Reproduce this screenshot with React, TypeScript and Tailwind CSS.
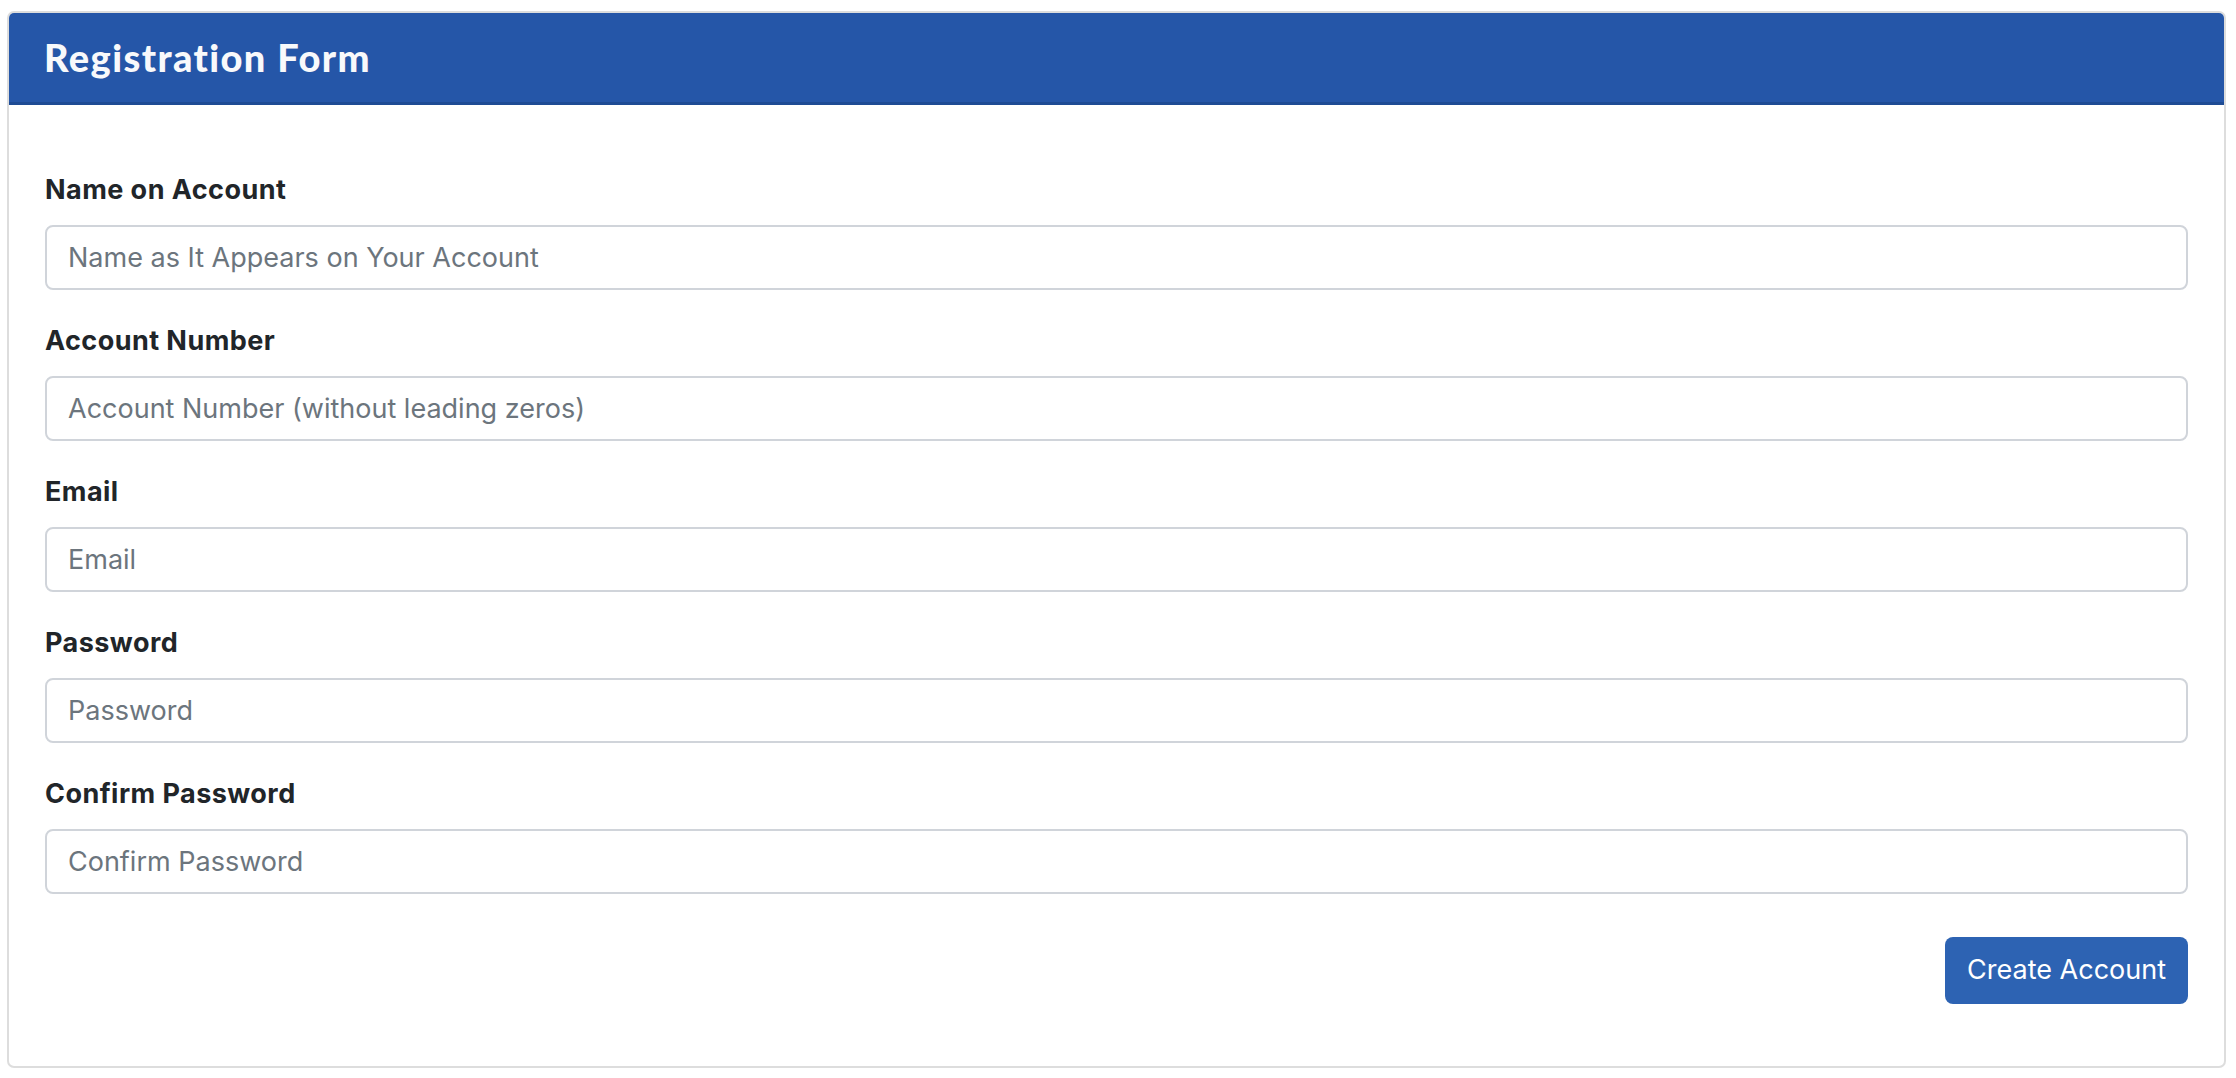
const fields = [
  { id: "name", label: "Name on Account", placeholder: "Name as It Appears on Your Account", type: "text" },
  { id: "account", label: "Account Number", placeholder: "Account Number (without leading zeros)", type: "text" },
  { id: "email", label: "Email", placeholder: "Email", type: "email" },
  { id: "password", label: "Password", placeholder: "Password", type: "password" },
  { id: "confirm", label: "Confirm Password", placeholder: "Confirm Password", type: "password" },
];

export default function App() {
  return (
    <div className="min-h-screen bg-white pl-[7px] pr-[10px] pt-[11px] font-['Inter',sans-serif]">
      <div className="rounded-[7px] border-2 border-[#dddddd] overflow-hidden bg-white">
        <div className="h-[92px] flex items-center px-[35px] bg-[#2556a8] border-b-[3px] border-[#1e4b94]">
          <h1 className="text-[38px] font-black text-[#f8f9fb] tracking-[1.4px] font-['Lato',sans-serif]">
            Registration Form
          </h1>
        </div>
        <form className="px-[36px] pt-[67px] pb-[62px]" onSubmit={(e) => e.preventDefault()}>
          <div className="flex flex-col gap-[33px]">
            {fields.map((f) => (
              <div key={f.id}>
                <label htmlFor={f.id} className="block text-[27px] leading-[36px] font-bold tracking-[0.45px] text-[#212529] mb-[17px]">
                  {f.label}
                </label>
                <input
                  id={f.id}
                  type={f.type}
                  placeholder={f.placeholder}
                  className="block w-full h-[65px] rounded-[8px] border-2 border-[#d0d4da] px-[21px] text-[27px] text-[#212529] placeholder:text-[#6c757d] outline-none"
                />
              </div>
            ))}
          </div>
          <div className="flex justify-end mt-[43px]">
            <button type="submit" className="h-[67px] px-[22px] rounded-[8px] bg-[#2d63b3] text-white text-[27px]">
              Create Account
            </button>
          </div>
        </form>
      </div>
    </div>
  );
}
